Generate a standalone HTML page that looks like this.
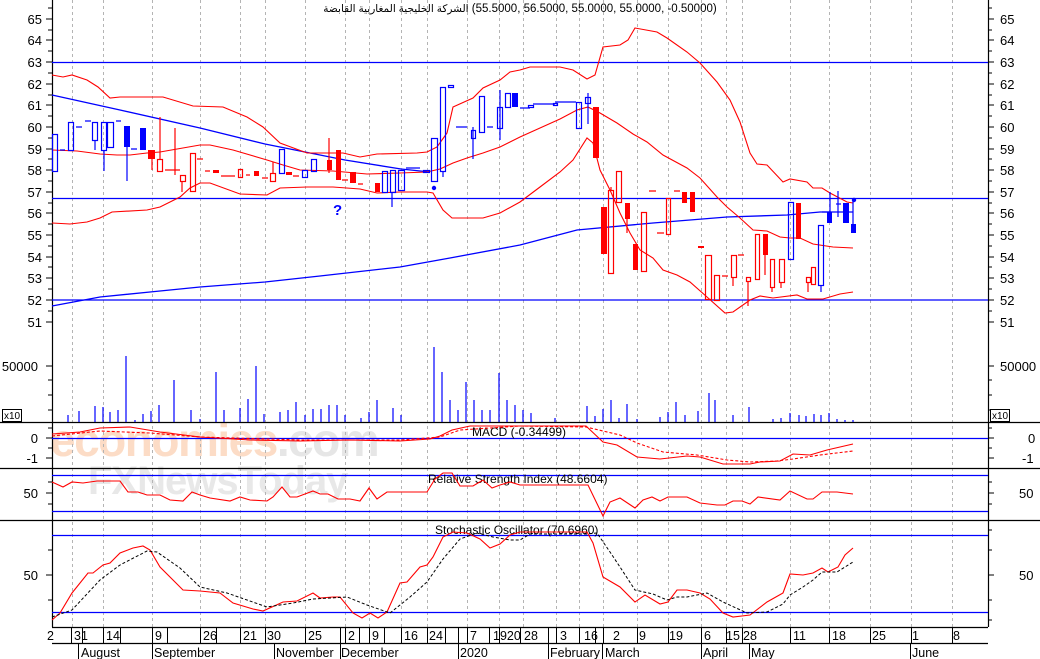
<!DOCTYPE html>
<html><head><meta charset="utf-8"><style>
html,body{margin:0;padding:0;background:#fff;}
#wrap{position:relative;width:1040px;height:659px;}
svg{display:block;font-family:"Liberation Sans","Noto Sans CJK SC",sans-serif;}
#title{position:absolute;left:0;top:3px;width:1040px;text-align:center;font:11.5px "Liberation Sans","DejaVu Sans",sans-serif;direction:ltr;unicode-bidi:isolate;white-space:nowrap;}
#title bdi{font-size:10.5px;}
</style></head><body><div id="wrap">
<svg width="1040" height="659" viewBox="0 0 1040 659" xmlns="http://www.w3.org/2000/svg">
<rect width="1040" height="659" fill="#fff"/>
<!-- watermark -->
<text x="50" y="456" font-size="46" font-weight="bold" fill="#fcdcc6" letter-spacing="-1.5">economies<tspan fill="#e6e6e6">.com</tspan></text>
<text x="88" y="494" font-size="40" font-weight="bold" fill="#e8e8e8" letter-spacing="-1">FXNewsToday</text>
<!-- grid -->
<g stroke="#b4b4b4" stroke-dasharray="3,3" stroke-width="1">
<path d="M72.5 0V627M103.5 0V627M152.5 0V627M200.5 0V627M240.5 0V627M265.5 0V627M305.5 0V627M345.5 0V627M369.5 0V627M401.5 0V627M427.5 0V627M467.5 0V627M499.5 0V627M523.5 0V627M556.5 0V627M579.5 0V627M603.5 0V627M637.5 0V627M668.5 0V627M701.5 0V627M726.5 0V627M742.5 0V627M790.5 0V627M829.5 0V627M870.5 0V627M911.5 0V627M952.5 0V627"/>
</g>
<!-- panel frames -->
<g stroke="#000" stroke-width="1.2" fill="none">
<path d="M52.5 0V627M988.5 0V627"/>
<path d="M0 422.5H1040M0 468.5H1040M0 520.5H1040M52 627.5H988M52 643.5H988"/>
<path d="M52 475.5H988M52 511.5H988M52 535.5H988" stroke-width="1"/>
</g>
<!-- axis ticks -->
<g stroke="#000" stroke-width="1">
<path d="M46 19H52M46 40H52M46 62H52M46 84H52M46 105H52M46 127H52M46 149H52M46 170H52M46 192H52M46 213H52M46 235H52M46 257H52M46 278H52M46 300H52M46 322H52M48 8H52M48 30H52M48 51H52M48 73H52M48 95H52M48 116H52M48 138H52M48 159H52M48 181H52M48 203H52M48 224H52M48 246H52M48 267H52M48 289H52M48 311H52"/>
<path d="M988 19H994M988 40H994M988 62H994M988 84H994M988 105H994M988 127H994M988 149H994M988 170H994M988 192H994M988 213H994M988 235H994M988 257H994M988 278H994M988 300H994M988 322H994M988 8H992M988 30H992M988 51H992M988 73H992M988 95H992M988 116H992M988 138H992M988 159H992M988 181H992M988 203H992M988 224H992M988 246H992M988 267H992M988 289H992M988 311H992"/>
<path d="M46 438H52M46 458H52M48 428H52M48 448H52M988 438H994M988 458H994M988 428H992M988 448H992"/>
<path d="M46 493H52M48 482H52M48 504H52M988 493H994M988 482H992M988 504H992"/>
<path d="M46 575H52M48 550H52M48 600H52M988 575H994M988 550H992M988 600H992M988 530H992M988 620H992"/>
<path d="M46 366H52M48 380H52M48 395H52M48 410H52M988 366H994M988 380H992M988 395H992M988 410H992"/>
</g>
<!-- labels -->
<g font-size="13" fill="#000">
<g text-anchor="end">
<text x="42" y="24">65</text><text x="42" y="45">64</text><text x="42" y="67">63</text><text x="42" y="89">62</text><text x="42" y="110">61</text><text x="42" y="132">60</text><text x="42" y="154">59</text><text x="42" y="175">58</text><text x="42" y="197">57</text><text x="42" y="218">56</text><text x="42" y="240">55</text><text x="42" y="262">54</text><text x="42" y="283">53</text><text x="42" y="305">52</text><text x="42" y="327">51</text>
<text x="38" y="371">50000</text><text x="38" y="443">0</text><text x="38" y="463">-1</text><text x="38" y="498">50</text><text x="38" y="580">50</text>
</g>
<text x="1000" y="24">65</text><text x="1000" y="45">64</text><text x="1000" y="67">63</text><text x="1000" y="89">62</text><text x="1000" y="110">61</text><text x="1000" y="132">60</text><text x="1000" y="154">59</text><text x="1000" y="175">58</text><text x="1000" y="197">57</text><text x="1000" y="218">56</text><text x="1000" y="240">55</text><text x="1000" y="262">54</text><text x="1000" y="283">53</text><text x="1000" y="305">52</text><text x="1000" y="327">51</text>
<text x="1000" y="371">50000</text><text x="1028" y="443">0</text><text x="1022" y="463">-1</text><text x="1019" y="498">50</text><text x="1019" y="580">50</text>
</g>
<g font-size="10"><rect x="2.5" y="409.5" width="19" height="12" fill="#fff" stroke="#000"/><text x="4" y="419">x10</text>
<rect x="990.5" y="409.5" width="19" height="12" fill="#fff" stroke="#000"/><text x="992" y="419">x10</text></g>

<!-- horizontal blue lines -->
<g stroke="#0000ff" stroke-width="1.3" fill="none">
<path d="M52 62.5H988M52 198.5H988M52 300H988"/>
<path d="M52 438.5H988M52 475.5H988M52 511.5H988M52 535.5H988M52 612.5H988"/>
<polyline points="52,95 120,110 200,128 265,144 305,152 345,160 401,169 430,172"/>
<polyline points="52,306 100,297 150,292 200,287 265,282 320,276 400,267 450,258 520,245 577,230 653,223 727,217 787,215 820,212 853,212"/>
</g>
<!-- bollinger -->
<g stroke="#ff0000" stroke-width="1.1" fill="none">
<polyline points="52,75 63,77 72,75 87,80 98,87 110,98 120,97 150,97 163,97 193,106 223,107 247,117 263,127 280,143 307,153 343,153 360,157 377,154 417,153 427,152 437,147 447,133 453,107 473,98 483,88 500,80 510,72 520,70 530,67 560,67 573,70 587,79 595,75 603,47 620,45 628,40 635,28 657,32 667,38 687,52 700,63 717,82 730,100 740,122 750,153 757,164 767,165 783,182 790,179 807,182 813,188 822,188 830,193 847,202 853,203"/>
<polyline points="52,150 77,151 100,154 117,155 130,155 147,153 160,152 200,145 210,145 233,150 267,160 283,165 300,170 333,171 367,174 400,173 427,172 440,169 453,163 467,158 483,153 500,147 520,137 540,128 560,119 577,110 588,107 600,113 617,123 633,134 647,142 663,155 687,168 700,178 717,197 727,207 740,218 753,230 767,231 780,237 790,238 800,238 813,244 833,247 853,248"/>
<polyline points="52,223 70,224 87,222 100,218 112,212 147,210 160,207 180,197 190,188 200,183 210,183 240,194 267,195 280,188 307,187 333,187 360,189 377,193 400,192 427,192 433,193 443,210 452,218 483,218 500,213 520,202 540,187 560,172 573,160 587,138 593,143 600,170 610,190 620,213 630,233 640,250 653,258 663,270 677,275 690,282 707,297 725,313 733,312 750,300 760,296 773,298 797,295 807,299 823,299 840,294 853,292"/>
</g>
<!-- candles blue -->
<g stroke="#0000ff" stroke-width="1.2" fill="none">
<path d="M60 150H65M76 127H82M85 121H91M116 121H121M131 149H137M406 168H420M456 127H467M487 127H493M520 108H530M533 104H555M555 102H576M822 212H831M95 140V150M104 150V171M127 147V181M392 192V207M443 171V177M473 127V159M500 90V140M588 93V124M830 192V212M838 191V217M853 201V224M821 285V292"/>
<rect x="52.5" y="134.5" width="5" height="37"/><rect x="68.5" y="122.5" width="5" height="28"/><rect x="92.5" y="122.5" width="5" height="18"/><rect x="101.5" y="122.5" width="5" height="28"/><rect x="107.5" y="122.5" width="6" height="25"/>
<rect x="279.5" y="149.5" width="5" height="24"/><rect x="302.5" y="170.5" width="5" height="7"/><rect x="311.5" y="159.5" width="5" height="12"/>
<rect x="382.5" y="171.5" width="5" height="21"/><rect x="390.5" y="170.5" width="5" height="22"/><rect x="398.5" y="170.5" width="6" height="20"/>
<rect x="423.5" y="170.5" width="6" height="2"/><rect x="431.5" y="138.5" width="6" height="43"/><rect x="440.5" y="87.5" width="5" height="84"/><rect x="448.5" y="85.5" width="5" height="2"/>
<rect x="471.5" y="130.5" width="4" height="8"/><rect x="479.5" y="96.5" width="5" height="36"/><rect x="497.5" y="107.5" width="5" height="21"/><rect x="505.5" y="93.5" width="5" height="14"/>
<rect x="528.5" y="105.5" width="5" height="2"/><rect x="553.5" y="103.5" width="4" height="2"/><rect x="576.5" y="102.5" width="5" height="26"/><rect x="585.5" y="97.5" width="5" height="6"/>
<rect x="788.5" y="202.5" width="5" height="57"/><rect x="818.5" y="225.5" width="5" height="60"/><path d="M836 204H841"/>
</g>
<g fill="#0000ff">
<rect x="124" y="126" width="6" height="21"/><rect x="140" y="128" width="6" height="22"/><rect x="512" y="93" width="6" height="14"/>
<rect x="827" y="212" width="5" height="11"/><rect x="843" y="203" width="6" height="20"/><rect x="851" y="224" width="5" height="9"/>
<circle cx="434" cy="188" r="2.2"/><circle cx="854" cy="200" r="2.2"/>
<text x="333" y="215" font-size="15" font-weight="bold">?</text>
</g>
<!-- candles red -->
<g stroke="#ff0000" stroke-width="1.2" fill="none">
<path d="M165 170H180M197 159H203M205 171H210M221 176H235M246 175H250M262 178H268M293 176H299M342 180H348M358 184H363M649 191H656M657 233H664M674 191H680M722 276H728M738 255H744M160 117V159M152 159V170M175 128V175M182 181V192M273 162V173M329 138V173M627 219V233M733 277V286M748 281V306M765 255V275M772 287V292M781 282V288M808 282V292M611 187V190"/>
<rect x="157.5" y="159.5" width="5" height="12"/><rect x="180.5" y="175.5" width="5" height="6"/><rect x="190.5" y="153.5" width="5" height="38"/>
<rect x="238.5" y="169.5" width="4" height="8"/><rect x="270.5" y="173.5" width="5" height="8"/>
<rect x="608.5" y="190.5" width="5" height="83"/><rect x="616.5" y="171.5" width="5" height="31"/><rect x="641.5" y="212.5" width="5" height="59"/>
<rect x="666.5" y="198.5" width="4" height="36"/><rect x="705.5" y="255.5" width="6" height="44"/><rect x="714.5" y="275.5" width="5" height="25"/>
<rect x="731.5" y="255.5" width="5" height="22"/><rect x="746.5" y="277.5" width="4" height="4"/><rect x="755.5" y="234.5" width="4" height="45"/>
<rect x="770.5" y="259.5" width="4" height="28"/><rect x="779.5" y="259.5" width="5" height="23"/><rect x="806.5" y="277.5" width="4" height="5"/><rect x="811.5" y="267.5" width="4" height="17"/>
</g>
<g fill="#ff0000">
<rect x="148" y="150" width="7" height="9"/><rect x="213" y="170" width="6" height="3"/><rect x="254" y="171" width="5" height="5"/><rect x="286" y="172" width="6" height="3"/>
<rect x="327" y="160" width="5" height="10"/><rect x="336" y="150" width="5" height="30"/><rect x="350" y="172" width="6" height="11"/><rect x="375" y="183" width="5" height="9"/>
<rect x="593" y="107" width="6" height="51"/><rect x="601" y="207" width="6" height="47"/><rect x="625" y="203" width="5" height="16"/><rect x="633" y="244" width="5" height="26"/>
<rect x="682" y="192" width="5" height="11"/><rect x="690" y="192" width="5" height="20"/><rect x="698" y="246" width="6" height="2"/><rect x="763" y="234" width="5" height="21"/><rect x="796" y="203" width="5" height="36"/>
</g>
<!-- volume -->
<g stroke="#0000ff" stroke-width="1.2">
<path d="M68 422V415M79 422V411M95 422V406M103 422V407M110 422V412M118 422V410M126 422V356M135 422V420M143 422V414M151 422V411M159 422V405M174 422V380M191 422V410M200 422V419M216 422V372M224 422V410M240 422V408M248 422V399M256 422V366M264 422V414M280 422V412M288 422V410M296 422V402M305 422V415M313 422V409M321 422V409M329 422V405M337 422V405M345 422V415M361 422V418M369 422V412M377 422V400M393 422V408M401 422V415M434 422V347M442 422V372M450 422V400M458 422V410M466 422V382M474 422V400M482 422V410M490 422V410M499 422V373M507 422V400M515 422V405M523 422V410M531 422V413M555 422V418M587 422V406M595 422V416M603 422V409M611 422V400M619 422V418M627 422V404M637 422V419M660 422V417M668 422V412M676 422V402M685 422V415M698 422V411M709 422V393M715 422V400M733 422V415M749 422V407M773 422V419M781 422V418M790 422V413M799 422V415M806 422V416M814 422V414M821 422V415M829 422V413M837 422V419M845 422V420M853 422V420"/>
</g>
<!-- MACD -->
<text x="472" y="436" font-size="12">MACD (-0.34499)</text>
<g stroke="#ff0000" stroke-width="1.1" fill="none">
<polyline points="52,434 80,432 100,428 130,427 160,432 200,437 250,440 300,441 350,440 400,441 430,439 440,436 452,430 470,426 520,426 586,426 603,442 617,445 637,457 660,459 687,456 700,457 723,464 750,464 760,462 780,461 793,454 810,455 827,450 853,444"/>
<polyline stroke-dasharray="3,2" points="52,436 100,431 150,433 200,437 300,440 400,440 440,437 460,430 520,426 586,427 620,435 637,443 663,452 697,455 727,460 750,462 777,461 793,459 820,455 853,451"/>
</g>
<!-- RSI -->
<text x="428" y="483" font-size="12">Relative Strength Index (48.6604)</text>
<polyline fill="none" stroke="#ff0000" stroke-width="1.1" points="52,482 63,487 72,482 83,483 97,481 120,481 128,492 138,492 147,495 160,495 170,500 183,501 192,492 200,495 210,498 230,501 240,497 250,500 267,501 273,497 282,487 290,497 297,497 313,491 320,494 328,494 338,499 350,499 360,501 369,488 377,499 387,492 427,492 435,479 443,473 452,473 460,486 473,486 483,480 492,488 500,485 510,482 520,485 582,485 588,485 603,516 610,502 620,498 635,508 643,500 652,497 660,501 668,497 687,497 700,503 717,505 725,505 733,501 742,501 750,504 758,497 780,500 790,491 807,499 813,499 822,492 837,492 853,494"/>
<!-- Stochastic -->
<text x="435" y="534" font-size="12">Stochastic Oscillator (70.6960)</text>
<polyline fill="none" stroke="#ff0000" stroke-width="1.1" points="52,620 60,613 72,593 88,573 93,573 103,565 110,563 120,553 133,548 143,546 150,550 160,567 183,590 200,591 220,593 233,603 253,609 263,611 283,602 297,601 313,593 320,598 333,597 340,597 353,613 362,618 370,613 378,618 387,612 400,583 407,582 420,567 427,565 433,557 443,537 453,532 467,533 480,539 490,548 500,544 510,535 520,532 587,532 593,543 603,577 620,587 635,602 645,595 660,604 668,602 677,590 687,590 700,593 710,599 723,613 733,617 750,615 767,602 783,593 790,574 803,575 813,573 822,568 828,572 838,567 845,555 853,548"/>
<polyline fill="none" stroke="#000" stroke-width="1" stroke-dasharray="3,2" points="52,617 72,610 100,580 120,565 147,551 157,552 180,568 200,587 227,593 267,607 293,603 313,599 347,597 367,605 390,613 410,597 427,582 443,559 460,539 477,533 493,537 510,540 520,540 530,534 587,534 597,533 610,552 620,567 635,590 653,594 667,600 677,597 687,597 707,593 723,602 747,613 767,612 783,604 790,595 803,587 813,580 822,572 837,572 853,562"/>
<!-- date axis -->
<g stroke="#000" stroke-width="1">
<path d="M71.5 627V643M78.5 643V659M152.5 643V659M274.5 643V659M340.5 643V659M458.5 643V659M548.5 643V659M602.5 643V659M701.5 643V659M749.5 643V659M910.5 643V659"/>
<path d="M82.5 627V643M103.5 627V643M120.5 627V643M152.5 627V643M167.5 627V643M200.5 627V643M216.5 627V643M240.5 627V643M265.5 627V643M305.5 627V643M340.5 627V643M345.5 627V643M359.5 627V643M369.5 627V643M384.5 627V643M401.5 627V643M427.5 627V643M445.5 627V643M458.5 627V643M467.5 627V643M489.5 627V643M499.5 627V643M520.5 627V643M548.5 627V643M556.5 627V643M579.5 627V643M595.5 627V643M603.5 627V643M637.5 627V643M668.5 627V643M701.5 627V643M726.5 627V643M742.5 627V643M790.5 627V643M829.5 627V643M870.5 627V643M911.5 627V643M952.5 627V643"/>
</g>
<g font-size="12.5">
<text x="47" y="640">2</text><text x="74" y="640">31</text><text x="106" y="640">14</text><text x="155" y="640">9</text><text x="203" y="640">26</text><text x="243" y="640">21</text><text x="267" y="640">30</text><text x="308" y="640">25</text><text x="348" y="640">2</text><text x="372" y="640">9</text><text x="404" y="640">16</text><text x="429" y="640">24</text><text x="470" y="640">7</text><text x="493" y="640">1920</text><text x="524" y="640">28</text><text x="560" y="640">3</text><text x="584" y="640">16</text><text x="613" y="640">2</text><text x="639" y="640">9</text><text x="669" y="640">19</text><text x="704" y="640">6</text><text x="726" y="640">15</text><text x="743" y="640">28</text><text x="793" y="640">11</text><text x="832" y="640">18</text><text x="872" y="640">25</text><text x="912" y="640">1</text><text x="953" y="640">8</text>
<text x="81" y="657">August</text><text x="154" y="657">September</text><text x="276" y="657">November</text><text x="341" y="657">December</text><text x="460" y="657">2020</text><text x="550" y="657">February</text><text x="605" y="657">March</text><text x="703" y="657">April</text><text x="751" y="657">May</text><text x="912" y="657">June</text>
</g>
</svg>
<div id="title"><bdi dir="rtl">الشركة الخليجية المغاربية القابضة</bdi> (55.5000, 56.5000, 55.0000, 55.0000, -0.50000)</div>
</div></body></html>
